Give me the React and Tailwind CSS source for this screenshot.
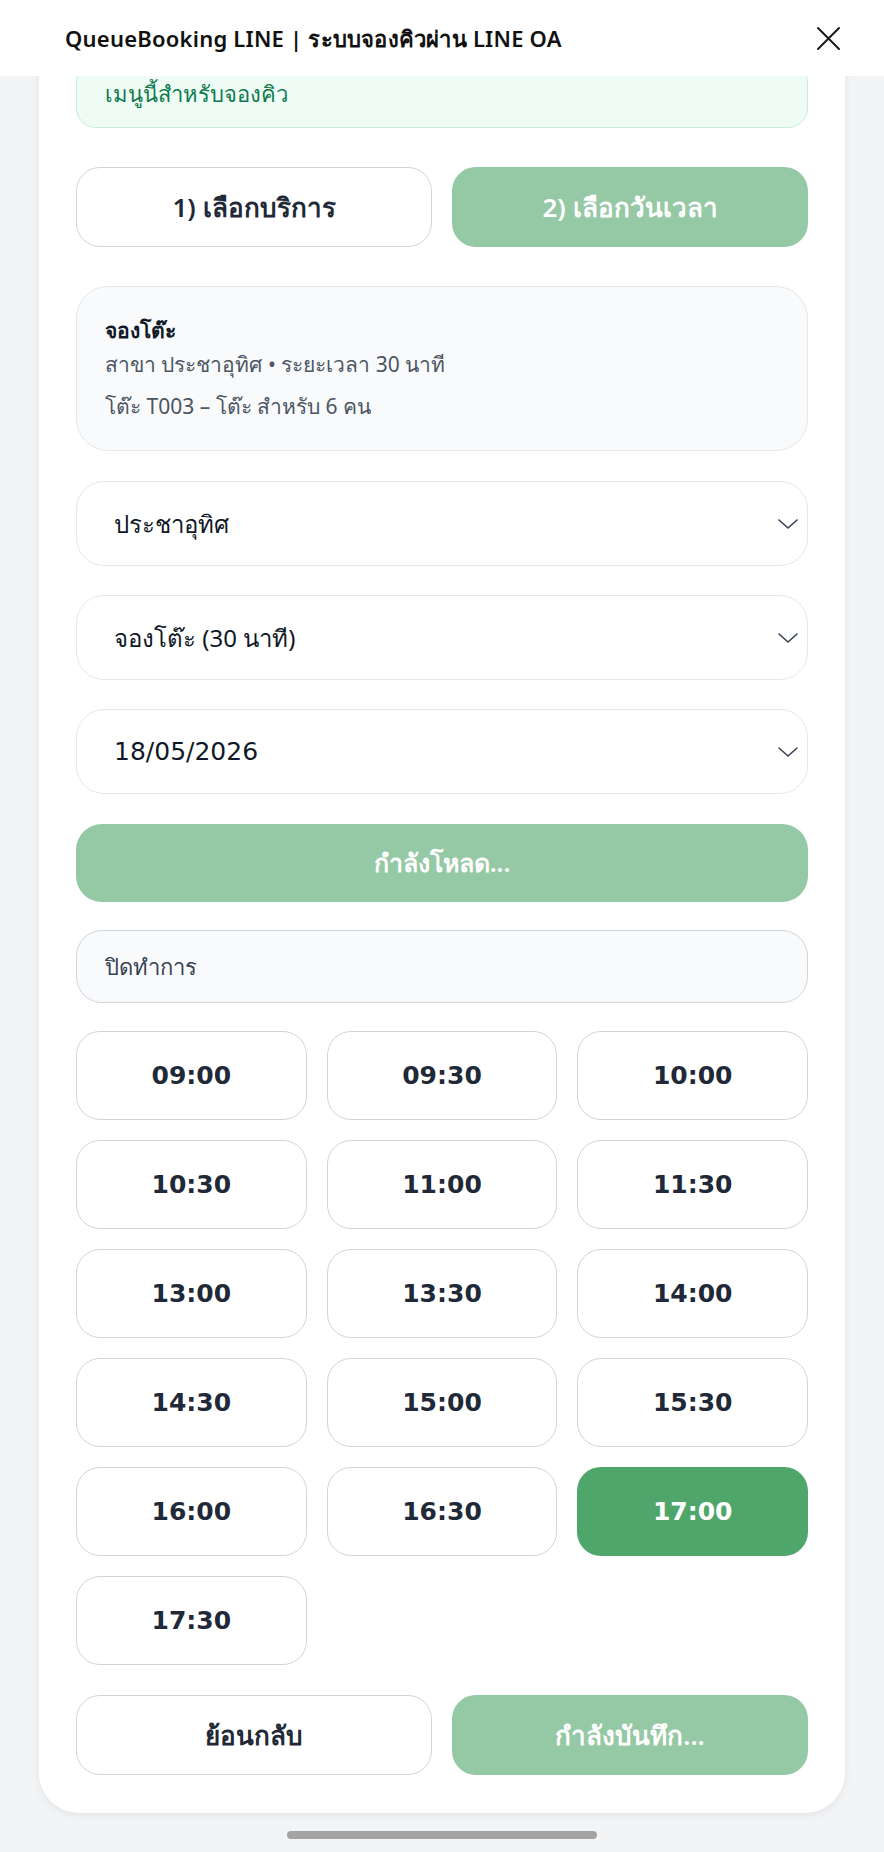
const times = [
  '09:00', '09:30', '10:00',
  '10:30', '11:00', '11:30',
  '13:00', '13:30', '14:00',
  '14:30', '15:00', '15:30',
  '16:00', '16:30', '17:00',
  '17:30',
];

const Chevron = () => (
  <svg width="20" height="10" viewBox="0 0 20 10" fill="none" stroke="#374151" strokeWidth="1.6" strokeLinecap="round" strokeLinejoin="round">
    <path d="M1 1l9 8 9-8" />
  </svg>
);

const SelectBox = ({ value, digits }) => (
  <div className="h-[85px] rounded-[28px] border border-[#e5e7eb] bg-white flex items-center justify-between pl-[37px] pr-[9px]">
    <span className={digits ? "font-['DejaVu_Sans',sans-serif] text-[25px] text-[#111827]" : 'text-[24px] text-[#111827]'}>{value}</span>
    <Chevron />
  </div>
);

export default function App() {
  const selected = '17:00';

  return (
    <div className="min-h-[1852px] bg-[#f3f4f6] font-['Noto_Sans',sans-serif]">
      <header className="relative z-10 h-[76px] bg-white flex items-center justify-between pl-[65px] pr-[43px]">
        <h1 className="text-[22px] font-semibold text-[#111111] tracking-[0.01em]">QueueBooking LINE | ระบบจองคิวผ่าน LINE OA</h1>
        <svg width="25" height="25" viewBox="0 0 25 25" fill="none" stroke="#1a1a1a" strokeWidth="2" strokeLinecap="round">
          <path d="M2 2l21 21M23 2L2 23" />
        </svg>
      </header>

      <main className="overflow-hidden">
        <div className="mx-[39px] -mt-[38px] bg-white rounded-[40px] px-[37px] pt-[24px] pb-[38px] shadow-[0_2px_10px_rgba(0,0,0,0.07)]">
          <div className="rounded-[20px] border border-[#c6ecd7] bg-[#effcf5] pl-[28px] pt-[16px] pb-[20px] text-[22px] leading-[28px] text-[#0e7a4c]">
            เมนูนี้สำหรับจองคิว
          </div>

          <div className="mt-[39px] grid grid-cols-2 gap-[20px]">
            <button className="h-[80px] rounded-[24px] border border-[#d1d5db] bg-white text-[26px] font-semibold text-[#1f2937]">1) เลือกบริการ</button>
            <button className="h-[80px] rounded-[24px] bg-[#95c8a4] text-[26px] font-semibold text-white">2) เลือกวันเวลา</button>
          </div>

          <div className="mt-[39px] h-[165px] rounded-[32px] border border-[#e5e7eb] bg-[#f9fafb] px-[28px] pt-[26px] text-[21px] leading-[34px] text-[#4b5563]">
            <div className="font-bold text-[#111827]">จองโต๊ะ</div>
            <div>สาขา ประชาอุทิศ • ระยะเวลา 30 นาที</div>
            <div className="mt-[8px]">โต๊ะ T003 – โต๊ะ สำหรับ 6 คน</div>
          </div>

          <div className="mt-[30px] flex flex-col gap-[29px]">
            <SelectBox value="ประชาอุทิศ" />
            <SelectBox value="จองโต๊ะ (30 นาที)" />
            <SelectBox value="18/05/2026" digits />
          </div>

          <button className="mt-[30px] w-full h-[78px] rounded-[26px] bg-[#95c8a4] text-[25px] font-semibold text-white">กำลังโหลด...</button>

          <div className="mt-[28px] h-[73px] rounded-[26px] border border-[#d1d5db] bg-[#f8fafc] flex items-center pl-[28px] text-[22px] text-[#374151]">
            ปิดทำการ
          </div>

          <div className="mt-[28px] grid grid-cols-3 gap-x-[20px] gap-y-[20px]">
            {times.map((t) => (
              <button
                key={t}
                className={
                  t === selected
                    ? "h-[89px] rounded-[24px] bg-[#4fa66b] font-['DejaVu_Sans',sans-serif] text-[25px] font-bold text-white"
                    : "h-[89px] rounded-[24px] border border-[#d1d5db] bg-white font-['DejaVu_Sans',sans-serif] text-[25px] font-bold text-[#1f2937]"
                }
              >
                {t}
              </button>
            ))}
          </div>

          <div className="mt-[30px] grid grid-cols-2 gap-[20px]">
            <button className="h-[80px] rounded-[24px] border border-[#d1d5db] bg-white text-[26px] font-semibold text-[#1f2937]">ย้อนกลับ</button>
            <button className="h-[80px] rounded-[24px] bg-[#95c8a4] text-[26px] font-semibold text-white">กำลังบันทึก...</button>
          </div>
        </div>

        <div className="mx-auto mt-[18px] w-[310px] h-[8px] rounded-full bg-[#a3a3a3]" />
      </main>
    </div>
  );
}
